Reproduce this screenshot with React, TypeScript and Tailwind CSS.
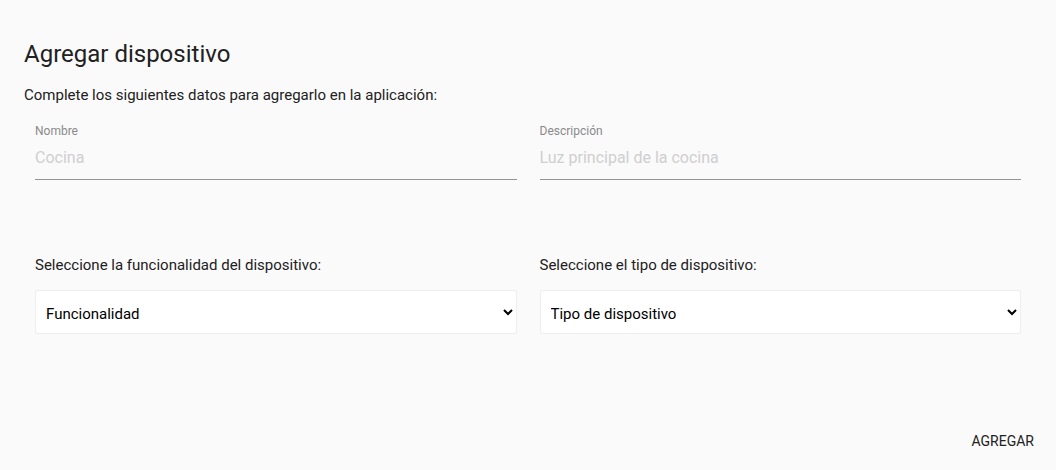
export default function App() {
  return (
    <div className="w-[1056px] h-[470px] bg-[#fafafa] font-['Roboto',sans-serif] text-[#212121] flex flex-col px-6 pt-[38px] pb-[11px]">
      <h2 className="text-[24px] leading-8 font-normal text-[#212121]">Agregar dispositivo</h2>
      <p className="mt-[15px] text-[15px] leading-5 text-[#212121]">
        Complete los siguientes datos para agregarlo en la aplicación:
      </p>

      <div className="px-[11px] grid grid-cols-2 gap-x-[23px]">
        {/* Text fields */}
        <div className="pt-[18px]">
          <label className="block text-[12px] leading-4 text-[#8a8a8a]">Nombre</label>
          <input
            className="w-full mt-[9px] pb-[11px] text-[16px] leading-5 outline-none border-b border-[#949494] placeholder:text-[#cfcfcf]"
            placeholder="Cocina"
          />
        </div>
        <div className="pt-[18px]">
          <label className="block text-[12px] leading-4 text-[#8a8a8a]">Descripción</label>
          <input
            className="w-full mt-[9px] pb-[11px] text-[16px] leading-5 outline-none border-b border-[#949494] placeholder:text-[#cfcfcf]"
            placeholder="Luz principal de la cocina"
          />
        </div>

        {/* Selects */}
        <div className="pt-[75px]">
          <p className="text-[15px] leading-5 text-[#212121]">Seleccione la funcionalidad del dispositivo:</p>
          <select className="mt-[15px] w-full h-[44px] bg-white border border-[#eeeeee] rounded-[3px] pl-[6px] pr-2 pt-[3px] text-[15px] text-black outline-none">
            <option>Funcionalidad</option>
          </select>
        </div>
        <div className="pt-[75px]">
          <p className="text-[15px] leading-5 text-[#212121]">Seleccione el tipo de dispositivo:</p>
          <select className="mt-[15px] w-full h-[44px] bg-white border border-[#eeeeee] rounded-[3px] pl-[6px] pr-2 pt-[3px] text-[15px] text-black outline-none">
            <option>Tipo de dispositivo</option>
          </select>
        </div>
      </div>

      <div className="mt-auto flex justify-end -mr-[18px]">
        <button className="px-4 h-9 text-[14px] uppercase text-[#212121]">Agregar</button>
      </div>
    </div>
  );
}
